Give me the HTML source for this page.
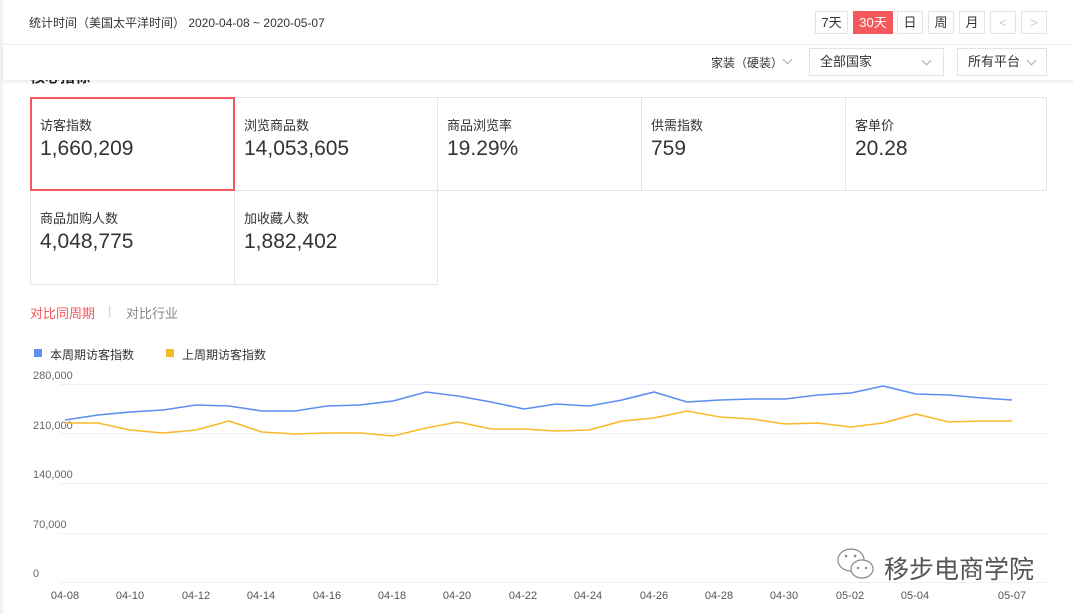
<!DOCTYPE html><html><head><meta charset="utf-8"><style>
*{margin:0;padding:0;box-sizing:border-box}
body{width:1074px;height:614px;background:#fff;font-family:"Liberation Sans","Noto Sans CJK SC",sans-serif;color:#333;position:relative;overflow:hidden}
.abs{position:absolute}
.btn{position:absolute;top:11px;height:23px;border:1px solid #e3e3e3;font-size:13px;text-align:center;line-height:21px;color:#333;background:#fff}
.sel{position:absolute;top:48px;height:28px;border:1px solid #e3e3e3;font-size:13px;line-height:26px;padding-left:10px;color:#333}
.chev{position:absolute;top:8px;width:7px;height:7px;border-right:1px solid #aaa;border-bottom:1px solid #aaa;transform:rotate(45deg)}
.card{position:absolute;border:1px solid #dfe6ee;padding:17px 0 0 9px}
.card .t{font-size:13px;color:#333}
.card .v{font-size:21px;color:#333;margin-top:3px}
.yl{position:absolute;left:33px;font-size:11px;color:#666}
.xl{position:absolute;top:590px;font-size:11px;color:#555;width:40px;margin-left:-20px;text-align:center}
</style></head><body>
<div class="abs" style="left:0;top:0;width:3px;height:614px;background:#f2f2f2"></div>
<div class="abs" style="left:30px;top:66px;font-size:15px;font-weight:bold;color:#222">核心指标</div>
<div class="abs" style="left:3px;top:44px;width:1071px;height:1px;background:#eee"></div>
<div class="abs" style="left:3px;top:45px;width:1071px;height:35px;background:#fff;box-shadow:0 2px 4px rgba(0,0,0,.08)"></div>
<div class="abs" style="left:29px;top:14px;font-size:12px;color:#333">统计时间（美国太平洋时间） 2020-04-08 ~ 2020-05-07</div>
<div class="btn" style="left:815px;width:33px">7天</div>
<div class="btn" style="left:853px;width:40px;background:#f5595b;border-color:#f5595b;color:#fff">30天</div>
<div class="btn" style="left:897px;width:26px">日</div>
<div class="btn" style="left:928px;width:26px">周</div>
<div class="btn" style="left:959px;width:26px">月</div>
<div class="btn" style="left:990px;width:26px;color:#ccc">&lt;</div>
<div class="btn" style="left:1021px;width:26px;color:#ccc">&gt;</div>
<div class="abs" style="left:711px;top:54px;font-size:12px">家装（硬装）</div>
<div class="chev" style="left:784px;top:56px"></div>
<div class="sel" style="left:809px;width:135px">全部国家<div class="chev" style="left:113px"></div></div>
<div class="sel" style="left:957px;width:90px">所有平台<div class="chev" style="left:70px"></div></div>

<div class="card" style="left:30px;top:97px;width:205px;height:94px"><div class="t">访客指数</div><div class="v">1,660,209</div></div>
<div class="card" style="left:234px;top:97px;width:204px;height:94px"><div class="t">浏览商品数</div><div class="v">14,053,605</div></div>
<div class="card" style="left:437px;top:97px;width:205px;height:94px"><div class="t">商品浏览率</div><div class="v">19.29%</div></div>
<div class="card" style="left:641px;top:97px;width:205px;height:94px"><div class="t">供需指数</div><div class="v">759</div></div>
<div class="card" style="left:845px;top:97px;width:202px;height:94px"><div class="t">客单价</div><div class="v">20.28</div></div>
<div class="card" style="left:30px;top:190px;width:205px;height:95px"><div class="t">商品加购人数</div><div class="v">4,048,775</div></div>
<div class="card" style="left:234px;top:190px;width:204px;height:95px"><div class="t">加收藏人数</div><div class="v">1,882,402</div></div>
<div class="abs" style="left:30px;top:97px;width:205px;height:94px;border:2px solid #f5595b"></div>

<div class="abs" style="left:30px;top:303px;font-size:13px;color:#f5595b">对比同周期</div>
<div class="abs" style="left:108px;top:303px;font-size:13px;color:#ccc">|</div>
<div class="abs" style="left:126px;top:303px;font-size:13px;color:#888">对比行业</div>
<div class="abs" style="left:34px;top:349px;width:8px;height:8px;background:#5b8ff0"></div>
<div class="abs" style="left:50px;top:346px;font-size:12px">本周期访客指数</div>
<div class="abs" style="left:166px;top:349px;width:8px;height:8px;background:#fbb82a"></div>
<div class="abs" style="left:182px;top:346px;font-size:12px">上周期访客指数</div>
<div class="yl" style="top:370px">280,000</div>
<div class="yl" style="top:420px">210,000</div>
<div class="yl" style="top:469px">140,000</div>
<div class="yl" style="top:519px">70,000</div>
<div class="yl" style="top:568px">0</div>
<svg class="abs" style="left:0;top:0" width="1074" height="614">
<g stroke="#eef0f5" stroke-width="1"><line x1="60" y1="384.5" x2="1047" y2="384.5"/><line x1="60" y1="433.5" x2="1047" y2="433.5"/><line x1="60" y1="483.5" x2="1047" y2="483.5"/><line x1="60" y1="533.5" x2="1047" y2="533.5"/><line x1="60" y1="582.5" x2="1047" y2="582.5"/></g>
<polyline fill="none" stroke="#5b8ff0" stroke-width="1.6" stroke-linejoin="round" points="65,420 98,415 130,412 163,410 196,405 229,406 262,411 295,411 327,406 360,405 393,401 426,392 458,396 491,402 524,409 556,404 589,406 622,400 654,392 687,402 720,400 752,399 785,399 818,395 851,393 883,386 916,394 949,395 982,398 1012,400"/>
<polyline fill="none" stroke="#fbb82a" stroke-width="1.6" stroke-linejoin="round" points="65,423 98,423 130,430 163,433 196,430 229,421 262,432 295,434 327,433 360,433 393,436 426,428 458,422 491,429 524,429 556,431 589,430 622,421 654,418 687,411 720,417 752,419 785,424 818,423 851,427 883,423 916,414 949,422 982,421 1012,421"/>
</svg>
<div class="xl" style="left:65px">04-08</div><div class="xl" style="left:130px">04-10</div><div class="xl" style="left:196px">04-12</div><div class="xl" style="left:261px">04-14</div><div class="xl" style="left:327px">04-16</div><div class="xl" style="left:392px">04-18</div><div class="xl" style="left:457px">04-20</div><div class="xl" style="left:523px">04-22</div><div class="xl" style="left:588px">04-24</div><div class="xl" style="left:654px">04-26</div><div class="xl" style="left:719px">04-28</div><div class="xl" style="left:784px">04-30</div><div class="xl" style="left:850px">05-02</div><div class="xl" style="left:915px">05-04</div><div class="xl" style="left:1012px">05-07</div>
<svg class="abs" style="left:836px;top:547px" width="44" height="36"><ellipse cx="15" cy="13" rx="13" ry="11" fill="#fff" stroke="#888" stroke-width="1.2"/><ellipse cx="26" cy="22" rx="11" ry="9" fill="#fff" stroke="#888" stroke-width="1.2"/><circle cx="10" cy="9" r="1.3" fill="#888"/><circle cx="19" cy="9" r="1.3" fill="#888"/><circle cx="22" cy="21" r="1.2" fill="#888"/><circle cx="30" cy="21" r="1.2" fill="#888"/></svg>
<div class="abs" style="left:884px;top:550px;font-size:25px;color:#555">移步电商学院</div>
</body></html>
